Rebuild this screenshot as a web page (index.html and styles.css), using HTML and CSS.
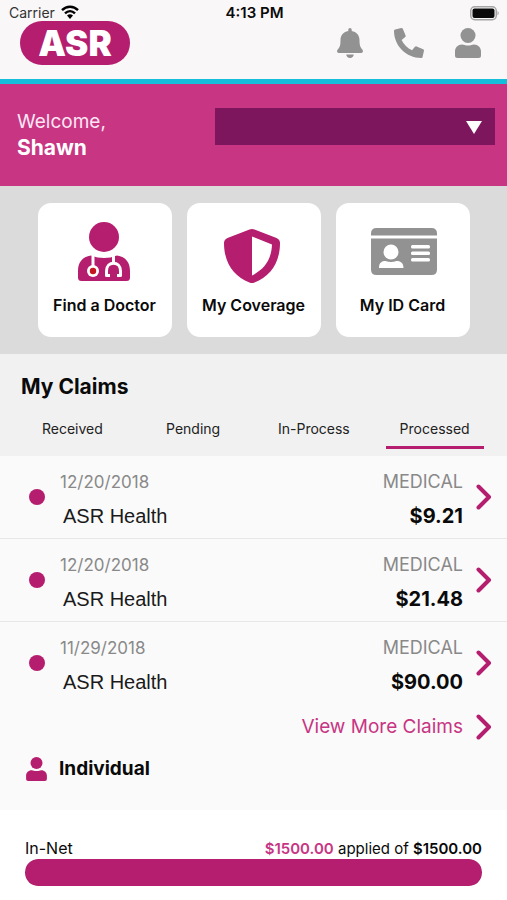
FILE: index.html
```html
<!DOCTYPE html>
<html lang="en">
<head>
<meta charset="utf-8">
<meta name="viewport" content="width=device-width, initial-scale=1">
<title>ASR Health</title>
<link rel="stylesheet" href="styles.css">
</head>
<body>
<svg class="defs" aria-hidden="true">
  <symbol id="person" viewBox="0 0 26 30">
    <circle cx="13" cy="7.5" r="7.5"/>
    <path d="M7 16.5C9 16.5 10 17.6 13 17.6S17 16.5 19 16.5C23 16.5 26 19.500 26 23.500V27.500Q26 30 23.500 30H2.500Q0 30 0 27.500V23.500C0 19.500 3 16.500 7 16.500Z"/>
  </symbol>
  <symbol id="chevron" viewBox="0 0 16 26">
    <path d="M2.500 2.500L13 13L2.500 23.500" fill="none" stroke="currentColor" stroke-width="4" stroke-linecap="round" stroke-linejoin="round"/>
  </symbol>
</svg>
<header class="top">
  <div class="status">
    <div class="carrier">Carrier
      <svg class="wifi" viewBox="0 0 18 14" aria-hidden="true"><g fill="none" stroke="currentColor" stroke-width="2.400"><path d="M1 5.200C5.500 .6 12.500 .6 17 5.200"/><path d="M4 8.400C7 5.500 11 5.500 14 8.400"/></g><path d="M6 10.600Q9 8 12 10.600L9 14Z"/></svg>
    </div>
    <div class="time">4:13 PM</div>
    <svg class="battery" viewBox="0 0 30 15" aria-hidden="true"><rect x=".75" y=".75" width="25.500" height="13" rx="4" fill="none" stroke="#a5a5a5" stroke-width="1.500"/><rect x="2.500" y="2.500" width="22" height="9.500" rx="2"/><path d="M27.500 5Q30 7.200 27.500 9.500Z" fill="#a5a5a5"/></svg>
  </div>
  <div class="brandbar">
    <div class="logo">ASR</div>
    <nav class="actions" aria-label="Account">
      <button type="button" aria-label="Notifications"><svg class="bell" viewBox="0 0 26 30"><path d="M13 0Q14.700 0 14.700 1.800V3C19.500 3.800 22.500 7.300 22.500 12C22.500 18 23.500 19.500 25.500 21.700C26.600 23.200 25.700 25 24 25H2C.3 25-.6 23.200 .5 21.700C2.500 19.500 3.500 18 3.500 12C3.500 7.300 6.500 3.800 11.300 3V1.800Q11.300 0 13 0ZM9.200 26.600H16.800Q16.200 30 13 30T9.200 26.600Z"/></svg></button>
      <button type="button" aria-label="Call"><svg class="phone" viewBox="0 0 512 512"><path d="M493.400 24.600l-104-24c-11.300-2.600-22.900 3.300-27.500 13.900l-48 112c-4.200 9.800-1.400 21.300 6.900 28l60.600 49.600c-36 76.700-98.900 140.500-177.200 177.200l-49.600-60.600c-6.800-8.300-18.200-11.100-28-6.900l-112 48C3.900 366.500-2 378.100.6 389.400l24 104C27.100 504.200 36.700 512 48 512c256.100 0 464-207.500 464-464 0-11.200-7.700-20.900-18.600-23.400z" transform="matrix(-1 0 0 1 512 0)"/></svg></button>
      <button type="button" aria-label="Profile"><svg class="user"><use href="#person"/></svg></button>
    </nav>
  </div>
</header>
<section class="welcome">
  <div class="greeting">Welcome,<strong>Shawn</strong></div>
  <div class="picker">
    <select aria-label="Plan"><option></option></select>
    <svg class="caret" viewBox="0 0 16 13" aria-hidden="true"><path d="M0 0H16L8 13Z"/></svg>
  </div>
</section>
<nav class="tiles" aria-label="Shortcuts">
  <a class="tile" href="#doctor">
    <svg viewBox="-1 0 56 60"><circle cx="26" cy="15" r="15"/><path d="M13 33.500Q26 38.500 39 33.500C48 34.500 52 41 52 49V55.500Q52 59 48.500 59H3.500Q0 59 0 55.500V49C0 41 4 34.500 13 33.500Z"/><g fill="none" stroke="#fff" stroke-width="3"><path d="M15 33V45"/><path d="M35.500 33V41"/><path d="M32 53.500H28.500V49C28.500 38.500 42.500 38.500 42.500 49V53.500H39" stroke-linejoin="round"/></g><circle cx="15" cy="49" r="6" fill="#fff"/><circle cx="15" cy="49" r="3.200" fill="#c51620"/></svg>
    <span>Find a Doctor</span>
  </a>
  <a class="tile" href="#coverage">
    <svg viewBox="2 -4 56 60"><path fill-rule="evenodd" d="M25.500 3.400Q28 2.400 30.500 3.400L52.500 12Q56 13.500 56 17C56 37 46 50.500 30.500 56.400Q28 57.400 25.500 56.400C10 50.500 0 37 0 17Q0 13.500 3.500 12ZM28 10.500V49.500C40 43.500 47.500 34 48 18.500Z"/></svg>
    <span>My Coverage</span>
  </a>
  <a class="tile" href="#id-card">
    <svg class="card" viewBox="-1 -1 66 60"><path d="M0 12.500V10.500Q0 5 5.500 5H60.500Q66 5 66 10.500V12.500ZM0 15.500H66V46.500Q66 52 60.500 52H5.500Q0 52 0 46.500Z"/><g fill="#fff"><circle cx="20" cy="29" r="7.500"/><path d="M8 45C8 39.500 11 38 14.500 38Q20 40 25.500 38C29 38 32.500 39.500 32.500 45Z"/><rect x="40" y="22" width="19" height="3.500" rx="1.500"/><rect x="40" y="28.500" width="19" height="3.500" rx="1.500"/><rect x="40" y="35" width="19" height="3.500" rx="1.500"/></g></svg>
    <span>My ID Card</span>
  </a>
</nav>
<main>
  <section class="claims-head">
    <h1>My Claims</h1>
    <div class="tabs" role="tablist">
      <button type="button" role="tab" aria-selected="false">Received</button>
      <button type="button" role="tab" aria-selected="false">Pending</button>
      <button type="button" role="tab" aria-selected="false">In-Process</button>
      <button type="button" role="tab" aria-selected="true">Processed</button>
    </div>
  </section>
  <section class="claims">
    <a class="claim" href="#claim-1">
      <i class="dot"></i>
      <span class="info"><span class="muted date">12/20/2018</span><span class="name">ASR Health</span></span>
      <span class="cost"><span class="muted">MEDICAL</span><b>$9.21</b></span>
      <svg class="chev"><use href="#chevron"/></svg>
    </a>
    <a class="claim" href="#claim-2">
      <i class="dot"></i>
      <span class="info"><span class="muted date">12/20/2018</span><span class="name">ASR Health</span></span>
      <span class="cost"><span class="muted">MEDICAL</span><b>$21.48</b></span>
      <svg class="chev"><use href="#chevron"/></svg>
    </a>
    <a class="claim" href="#claim-3">
      <i class="dot"></i>
      <span class="info"><span class="muted date">11/29/2018</span><span class="name">ASR Health</span></span>
      <span class="cost"><span class="muted">MEDICAL</span><b>$90.00</b></span>
      <svg class="chev"><use href="#chevron"/></svg>
    </a>
    <a class="more" href="#claims">View More Claims <svg class="chev"><use href="#chevron"/></svg></a>
    <h2><svg class="member"><use href="#person"/></svg>Individual</h2>
  </section>
  <section class="usage">
    <div class="usage-text"><span id="in-net">In-Net</span><span class="amount"><b class="spent">$1500.00</b> applied of <b>$1500.00</b></span></div>
    <div class="bar" role="progressbar" aria-labelledby="in-net" aria-valuenow="1500" aria-valuemin="0" aria-valuemax="1500"><div class="fill" style="width:100%"></div></div>
  </section>
</main>
</body>
</html>
```
FILE: styles.css
```css
:root {
  --brand: #b51d6e;
  --grey: #929292;
}
* { box-sizing: border-box; }
body {
  margin: 0;
  background: #fff;
  color: #0a0a0a;
  font-family: Inter, "Liberation Sans", sans-serif;
}
a { color: inherit; text-decoration: none; }
button { border: 0; padding: 0; background: none; font: inherit; color: inherit; }
svg { display: block; fill: currentColor; flex: none; overflow: visible; }
.defs { position: absolute; width: 0; height: 0; }

.top { background: #f9f7f8; border-bottom: 5px solid #14bfdb; }
.status {
  display: grid;
  grid-template-columns: 1fr auto 1fr;
  align-items: end;
  height: 21px;
  padding: 0 7px 0 9px;
  font-size: 14px;
  line-height: 16px;
}
.carrier { display: flex; gap: 6px; color: #333; }
.wifi { width: 18px; height: 14px; color: #000; }
.time { font-size: 15px; font-weight: 600; }
.battery { width: 30px; height: 15px; justify-self: end; }
.brandbar {
  display: flex;
  justify-content: space-between;
  align-items: center;
  padding: 0 26px 14px 20px;
}
.logo {
  width: 110px;
  height: 44px;
  border-radius: 22px;
  background: var(--brand);
  color: #fff;
  font-size: 35px;
  line-height: 44px;
  font-weight: 900;
  text-align: center;
}
.actions { display: flex; gap: 31px; color: var(--grey); }
.bell, .user { width: 26px; height: 30px; }
.phone { width: 30px; height: 30px; }

.welcome {
  display: flex;
  align-items: flex-start;
  padding: 24px 12px 25px 17px;
  background: #c73583;
  color: #fff;
}
.greeting { width: 198px; padding-top: 1px; font-size: 19px; line-height: 26px; color: #ffe6f5; }
.greeting strong { display: block; font-size: 21px; color: #fff; }
.picker { position: relative; flex: 1; }
.picker select {
  display: block;
  width: 100%;
  height: 37px;
  appearance: none;
  border: 0;
  border-radius: 0;
  background: #7e165d;
  color: #fff;
}
.caret { position: absolute; right: 13px; top: 13px; width: 16px; height: 13px; pointer-events: none; }

.tiles {
  display: flex;
  justify-content: center;
  gap: 15px;
  padding: 17px 0;
  background: #dbdbdb;
}
.tile {
  display: flex;
  flex-direction: column;
  align-items: center;
  gap: 13px;
  width: 134px;
  height: 134px;
  padding-top: 19px;
  border-radius: 13px;
  background: #fff;
  font-size: 16px;
  line-height: 20px;
  font-weight: 600;
  white-space: nowrap;
}
.tile svg { width: 56px; height: 60px; color: var(--brand); }
.tile .card { width: 66px; color: var(--grey); }

.claims-head { padding: 19px 12px 7px; background: #f1f1f1; }
h1 { margin: 0 0 18px 9px; font-size: 21px; line-height: 28px; font-weight: 700; }
.tabs { display: grid; grid-template-columns: repeat(4, 1fr); justify-items: center; }
.tabs button {
  width: 98px;
  padding-bottom: 7px;
  border-bottom: 3px solid transparent;
  font-size: 14px;
  line-height: 20px;
  color: #222;
}
.tabs [aria-selected="true"] { border-color: var(--brand); }

.claims { background: #fafafa; padding-bottom: 27px; }
.claim {
  display: flex;
  align-items: center;
  height: 83px;
  padding: 0 15px 0 29px;
  border-bottom: 1px solid #e7e7e7;
}
.claim:nth-of-type(3) { border-color: transparent; }
.dot { width: 16px; height: 16px; border-radius: 50%; background: var(--brand); }
.info { flex: 1; padding-left: 15px; }
.info, .cost { padding-top: 3px; }
.info span, .cost > * { display: block; }
.muted { color: #898989; font-size: 18px; line-height: 24px; }
.info .date { font-size: 17px; }
.name { margin: 10px 0 0 3px; font: 20px/24px "Liberation Sans", sans-serif; color: #1a1a1a; }
.cost { text-align: right; }
.cost b { margin-top: 10px; font-size: 20px; line-height: 24px; font-weight: 700; }
.chev { width: 16px; height: 26px; margin-left: 13px; color: var(--brand); }
.more {
  display: flex;
  align-items: center;
  justify-content: flex-end;
  padding: 8px 15px 0 0;
  font-size: 19px;
  line-height: 28px;
  color: #c73583;
}
h2 {
  display: flex;
  align-items: center;
  gap: 12px;
  margin: 14px 0 0 26px;
  font-size: 19px;
  line-height: 28px;
  font-weight: 700;
}
.member { width: 21px; height: 24px; color: var(--brand); }

.usage { padding: 28px 25px 15px; }
.usage-text {
  display: flex;
  justify-content: space-between;
  align-items: baseline;
  font-size: 16px;
  line-height: 20px;
}
.amount { font-size: 15px; }
.amount b { font-weight: 600; }
.amount .spent { color: #c73583; }
.bar { height: 27px; border-radius: 13px; background: #ddd; overflow: hidden; }
.fill { height: 100%; border-radius: 13px; background: var(--brand); }
```
